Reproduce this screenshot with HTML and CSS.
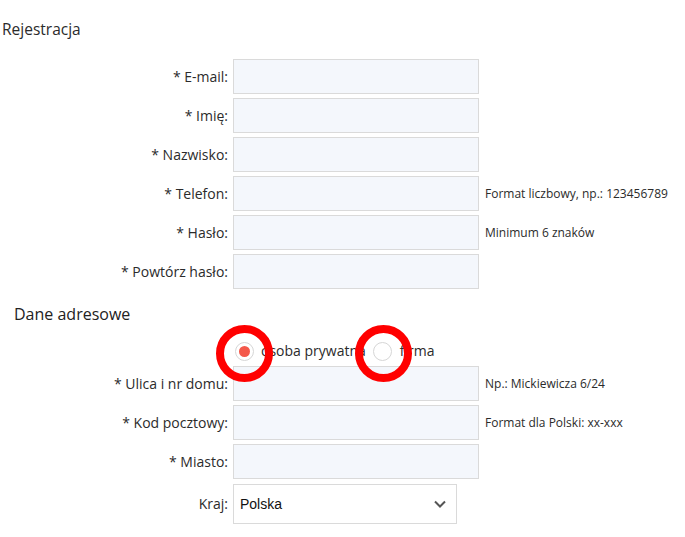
FILE: index.html
```html
<!DOCTYPE html>
<html lang="pl">
<head>
  <meta charset="UTF-8">
  <meta name="viewport" content="width=device-width, initial-scale=1.0">
  <title>Rejestracja</title>
  <link rel="stylesheet" href="styles.css">
</head>
<body>

  <h2 class="page-title">Rejestracja</h2>

  <form class="reg-form">
    <div class="form-row">
      <label for="email">* E-mail:</label>
      <input type="text" id="email">
    </div>
    <div class="form-row">
      <label for="imie">* Imię:</label>
      <input type="text" id="imie">
    </div>
    <div class="form-row">
      <label for="nazwisko">* Nazwisko:</label>
      <input type="text" id="nazwisko">
    </div>
    <div class="form-row">
      <label for="telefon">* Telefon:</label>
      <input type="text" id="telefon">
      <span class="hint">Format liczbowy, np.: 123456789</span>
    </div>
    <div class="form-row">
      <label for="haslo">* Hasło:</label>
      <input type="password" id="haslo">
      <span class="hint">Minimum 6 znaków</span>
    </div>
    <div class="form-row">
      <label for="haslo2">* Powtórz hasło:</label>
      <input type="password" id="haslo2">
    </div>

    <h3 class="section-title">Dane adresowe</h3>

    <div class="form-row radio-row">
      <span></span>
      <div class="radio-group">
        <label class="radio-option">
          <span class="radio-wrap">
            <input type="radio" name="typ" checked>
            <span class="ring"></span>
          </span>
          osoba prywatna
        </label>
        <label class="radio-option">
          <span class="radio-wrap">
            <input type="radio" name="typ">
            <span class="ring"></span>
          </span>
          firma
        </label>
      </div>
    </div>

    <div class="form-row">
      <label for="ulica">* Ulica i nr domu:</label>
      <input type="text" id="ulica">
      <span class="hint">Np.: Mickiewicza 6/24</span>
    </div>
    <div class="form-row">
      <label for="kod">* Kod pocztowy:</label>
      <input type="text" id="kod">
      <span class="hint">Format dla Polski: xx-xxx</span>
    </div>
    <div class="form-row">
      <label for="miasto">* Miasto:</label>
      <input type="text" id="miasto">
    </div>
    <div class="form-row select-row">
      <label for="kraj">Kraj:</label>
      <div class="select-wrap">
        <select id="kraj">
          <option>Polska</option>
        </select>
        <svg class="chevron" width="12" height="8" viewBox="0 0 12 8"><path d="M1 1.5 L6 6.5 L11 1.5" fill="none" stroke="#555" stroke-width="2"/></svg>
      </div>
    </div>
  </form>

</body>
</html>
```

FILE: styles.css
```css
* { margin: 0; padding: 0; box-sizing: border-box; }
body { font-family: 'Open Sans', sans-serif; color: #2b2b2b; background: #fff; }

.page-title { font-size: 15.5px; font-weight: normal; line-height: 20px; margin: 19px 0 20px 2px; color: #2b2b2b; }
.section-title { font-size: 16px; font-weight: normal; line-height: 22px; margin: 14px 0 16px 14px; color: #222; }

.form-row { display: grid; grid-template-columns: 228px 246px auto; column-gap: 5px; align-items: center; margin-bottom: 4px; }
.form-row > label { text-align: right; font-size: 14px; line-height: 20px; color: #2b2b2b; }
.form-row input[type="text"],
.form-row input[type="password"] { height: 35px; width: 246px; background: #f4f7fc; border: 1px solid #dadada; outline: none; font-family: inherit; font-size: 14px; padding: 0 6px; }
.hint { font-size: 12px; padding-left: 1px; color: #2b2b2b; }

.radio-row { margin-bottom: 5px; height: 20px; }
.radio-group { display: flex; align-items: center; grid-column: 2 / 4; }
.radio-option { display: flex; align-items: center; font-size: 14px; line-height: 20px; color: #2b2b2b; }
.radio-option + .radio-option { margin-left: 6px; }
.radio-wrap { position: relative; display: flex; width: 20px; height: 20px; align-items: center; justify-content: center; margin: 0 7px 0 1px; }
.radio-wrap input { appearance: none; -webkit-appearance: none; width: 19px; height: 19px; border-radius: 50%; border: 1px solid #d6d6d6; background: #fff; display: flex; align-items: center; justify-content: center; margin: 0; }
.radio-wrap input:checked::after { content: ""; width: 11px; height: 11px; border-radius: 50%; background: #f4584a; }

/* red annotation rings drawn over the radios */
.ring { position: absolute; left: 50%; top: 50%; width: 57px; height: 57px; margin: -26px 0 0 -28px; border: 8px solid #f00; border-radius: 50%; z-index: 2; pointer-events: none; }

.select-row { margin-top: 5px; }
.select-wrap { position: relative; width: 224px; }
.select-wrap select { appearance: none; -webkit-appearance: none; width: 224px; height: 40px; background: #fff; border: 1px solid #dadada; font-family: 'Liberation Sans', Arial, sans-serif; font-size: 14px; color: #111; padding: 0 6px; outline: none; }
.chevron { position: absolute; right: 11px; top: 16px; pointer-events: none; }
```
